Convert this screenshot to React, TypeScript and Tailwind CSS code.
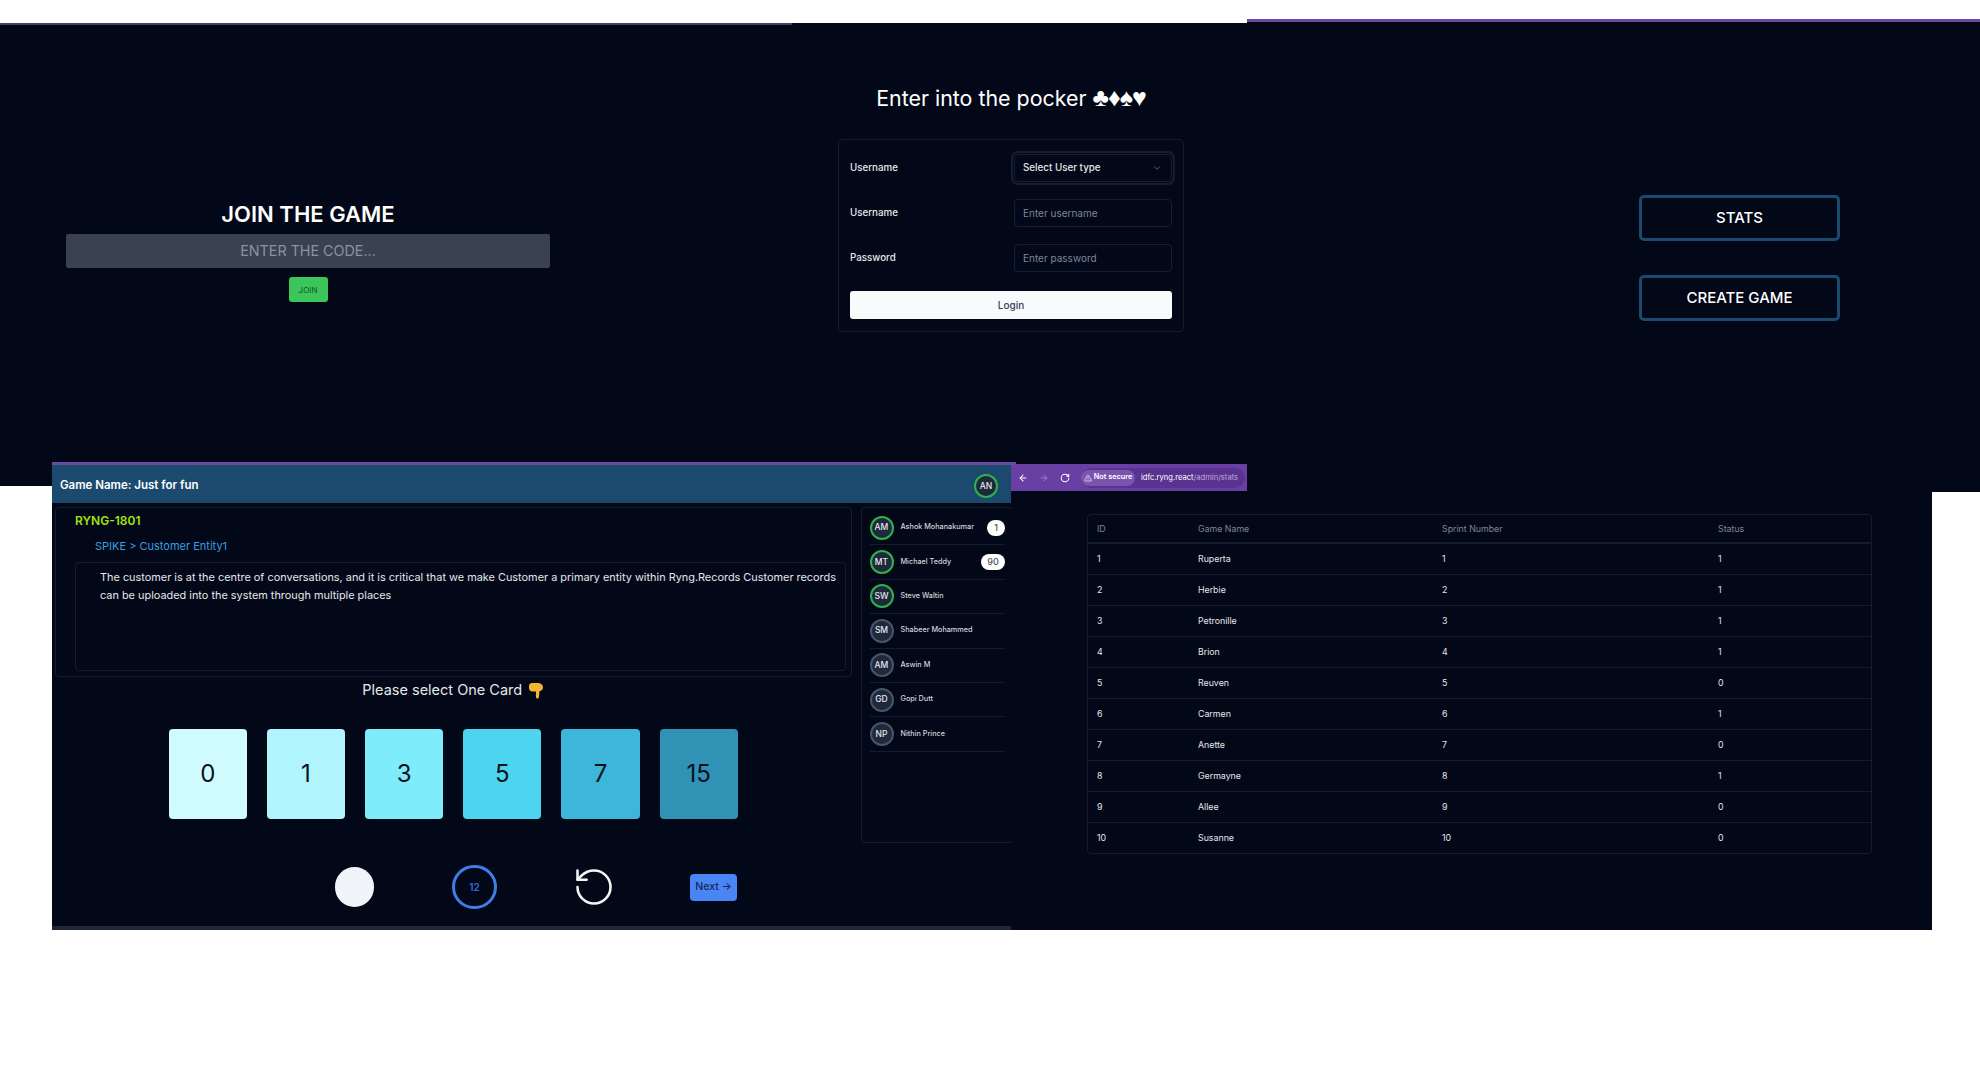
import { ArrowLeft, ArrowRight, ChevronDown, RotateCcw, RotateCw, TriangleAlert } from "lucide-react";

const players = [
  { i: "AM", n: "Ashok Mohanakumar", on: true, b: "1" },
  { i: "MT", n: "Michael Teddy", on: true, b: "90" },
  { i: "SW", n: "Steve Waltin", on: true },
  { i: "SM", n: "Shabeer Mohammed", on: false },
  { i: "AM", n: "Aswin M", on: false },
  { i: "GD", n: "Gopi Dutt", on: false },
  { i: "NP", n: "Nithin Prince", on: false },
];

const cards = [
  { v: "0", c: "bg-[#cffafe]" },
  { v: "1", c: "bg-[#b0f4fd]" },
  { v: "3", c: "bg-[#7eecfb]" },
  { v: "5", c: "bg-[#4dd5f0]" },
  { v: "7", c: "bg-[#3eb6d9]" },
  { v: "15", c: "bg-[#3092b5]" },
];

const rows: [string, string, string, string][] = [
  ["1", "Ruperta", "1", "1"],
  ["2", "Herbie", "2", "1"],
  ["3", "Petronille", "3", "1"],
  ["4", "Brion", "4", "1"],
  ["5", "Reuven", "5", "0"],
  ["6", "Carmen", "6", "1"],
  ["7", "Anette", "7", "0"],
  ["8", "Germayne", "8", "1"],
  ["9", "Allee", "9", "0"],
  ["10", "Susanne", "10", "0"],
];

function Hand() {
  return (
    <svg width="16" height="17" viewBox="0 0 16 17" className="ml-[6px] shrink-0">
      <path
        d="M1 4C1 2 2.4 1 4 1h5.5c2.6 0 5.5 1.400 5.500 4.200 0 2.300-1.500 3.600-3.500 4l-.6 5.800c-.1 1-.8 1.500-1.500 1.500s-1.400-.5-1.500-1.500L8 9.500H4.500C2.500 9.500 1 8 1 6z"
        fill="#f4b62f"
      />
    </svg>
  );
}

function JoinWindow() {
  return (
    <section className="absolute left-0 top-[23px] h-[463px] w-[792px] border-t-2 border-[#4a3a70] bg-[#020817]">
      <div className="flex w-[616px] flex-col items-center pt-[174px]">
        <h1 className="text-[22px] font-semibold leading-[30px] text-white">JOIN THE GAME</h1>
        <div className="mt-[5px] flex h-[34px] w-[484px] items-center justify-center rounded-[2px] bg-[#3a4252] text-[14.3px] text-[#8a93a3]">
          ENTER THE CODE...
        </div>
        <button className="mt-[9px] h-[25px] w-[39px] rounded-[3px] bg-[#3cc558] text-[8px] text-[#14532d]">JOIN</button>
      </div>
    </section>
  );
}

function Field({ label, placeholder }: { label: string; placeholder: string }) {
  return (
    <div className="mt-[17px] flex h-[28px] items-center justify-between">
      <span className="text-[9.75px] font-medium text-gray-200">{label}</span>
      <div className="flex h-[28.5px] w-[158px] items-center rounded-[4px] border border-[#161e30] pl-[8px] text-[10px] text-[#7d8798]">
        {placeholder}
      </div>
    </div>
  );
}

function LoginWindow() {
  return (
    <section className="absolute left-[448px] top-[23px] h-[463px] w-[799px] bg-[#020817] pl-[390px]">
      <h2 className="mt-[60px] h-[30px] w-[346px] whitespace-nowrap text-center text-[21.4px] leading-[30px] text-white">
        Enter into the pocker <span className="font-['Liberation_Sans',sans-serif] text-[25px] leading-[20px] tracking-[-1px]">♣♦♠♥</span>
      </h2>
      <div className="mt-[26px] h-[193px] w-[346px] rounded-[5px] border border-[#141c2e] px-[11px] pt-[14px]">
        <div className="flex h-[28px] items-center justify-between">
          <span className="text-[9.75px] font-medium text-gray-200">Username</span>
          <div className="flex h-[28px] w-[158px] items-center justify-between rounded-[4px] border border-[#161e30] pl-[8px] pr-[9px] text-[9.8px] font-medium text-gray-200 outline-2 outline-offset-1 outline-[#161e30]">
            Select User type
            <ChevronDown size={10} className="text-gray-500" />
          </div>
        </div>
        <Field label="Username" placeholder="Enter username" />
        <Field label="Password" placeholder="Enter password" />
        <button className="mt-[19px] h-[28px] w-full rounded-[3px] bg-[#f8fafc] text-[10px] font-medium text-[#374151]">Login</button>
      </div>
    </section>
  );
}

function MenuWindow() {
  return (
    <section className="absolute left-[1247px] top-[19px] h-[473px] w-[733px] border-t-[3px] border-[#6f4ba6] bg-[#020817] pl-[392px] pt-[173px]">
      <div className="flex w-[201px] flex-col gap-[34px]">
        <button className="h-[46px] rounded-[5px] border-[3px] border-[#1c4a6e] text-[15px] font-medium text-white">STATS</button>
        <button className="h-[46px] rounded-[5px] border-[3px] border-[#1c4a6e] text-[15px] font-medium text-white">CREATE GAME</button>
      </div>
    </section>
  );
}

function Avatar({ i, on }: { i: string; on: boolean }) {
  return (
    <div
      className={`flex h-[24px] w-[24px] shrink-0 items-center justify-center rounded-full border-2 bg-[#1e293b] text-[8.5px] font-medium text-gray-200 ${
        on ? "border-[#2fb24c]" : "border-[#475569]"
      }`}
    >
      {i}
    </div>
  );
}

function GameWindow() {
  return (
    <section className="absolute left-[52px] top-[462px] flex h-[468px] w-[959px] flex-col border-t-[3px] border-[#6b4a9e] bg-[#020817]">
      <div className="absolute -right-[5px] -top-[3px] h-[3px] w-[5px] bg-[#6b4a9e]" />
      <header className="flex h-[38px] shrink-0 items-center justify-between bg-[#1c4a6e] pl-[8px] pr-[13px] pt-[4px]">
        <span className="text-[11.5px] font-semibold text-white">Game Name: Just for fun</span>
        <Avatar i="AN" on />
      </header>
      <div className="flex flex-1 pl-[3px] pt-[4px]">
        <div className="w-[796.5px] shrink-0">
          <div className="h-[170px] rounded-[4px] border border-[#141c2e] pt-[5px]">
            <div className="ml-[19px] text-[12px] font-semibold leading-[16px] text-[#a2e30b]">RYNG-1801</div>
            <div className="ml-[39px] mt-[9px] text-[11px] leading-[16px] text-[#3a9ee4]">SPIKE &gt; Customer Entity1</div>
            <div className="ml-[19px] mr-[5px] mt-[8px] h-[109px] rounded-[4px] border border-[#141c2e] pl-[24px] pr-[4px] pt-[5px] text-[10.9px] leading-[18px] text-gray-200">
              The customer is at the centre of conversations, and it is critical that we make Customer a primary entity within Ryng.Records Customer records can be uploaded into the system through multiple places
            </div>
          </div>
          <div className="mt-[3px] flex h-[20px] items-center justify-center text-[14.5px] text-gray-200">
            Please select One Card
            <Hand />
          </div>
          <div className="mt-[29px] flex justify-center gap-[20px]">
            {cards.map((c) => (
              <div key={c.v} className={`flex h-[90px] w-[78.2px] items-center justify-center rounded-[4px] text-[24px] text-[#0b1220] ${c.c}`}>
                {c.v}
              </div>
            ))}
          </div>
          <div className="ml-[280px] mt-[46px] flex h-[44px] items-center">
            <div className="h-[40px] w-[39px] rounded-full bg-[#f1f5f9]" />
            <div className="ml-[78px] flex h-[44px] w-[45px] items-center justify-center rounded-full border-[3px] border-[#3f7ee8] text-[10px] font-semibold text-[#2f6de0]">12</div>
            <RotateCcw size={44} strokeWidth={1.4} className="ml-[75px] text-gray-100" />
            <button className="ml-[74px] h-[27px] w-[47px] rounded-[4px] bg-[#4a85f6] text-[10.5px] font-medium text-[#172554]">Next →</button>
          </div>
        </div>
        <aside className="ml-[9px] flex h-[336px] flex-1 flex-col rounded-l-[4px] border-y border-l border-[#141c2e] pl-[8px] pr-[6px] pt-[3px]">
          {players.map((p) => (
            <div key={p.n + p.i} className="flex h-[34.4px] shrink-0 items-center border-b border-[#141c2e]">
              <Avatar i={p.i} on={p.on} />
              <span className="ml-[7px] flex-1 text-[7.25px] font-medium text-gray-300">{p.n}</span>
              {p.b && (
                <span className={`flex h-[16px] items-center justify-center rounded-full bg-white text-[9px] font-medium text-gray-600 ${p.b.length > 1 ? "w-[24px]" : "w-[18px]"}`}>
                  {p.b}
                </span>
              )}
            </div>
          ))}
        </aside>
      </div>
      <div className="h-[4px] shrink-0 bg-[#1e2735]" />
    </section>
  );
}

function StatsWindow() {
  return (
    <section className="absolute left-[1011px] top-[464px] h-[466px] w-[921px] bg-[#020817]">
      <div className="flex h-[27px] w-[236px] items-center bg-[#6a3fa3] pl-[7px] text-white">
        <ArrowLeft size={10} strokeWidth={2.5} />
        <ArrowRight size={10} strokeWidth={2} className="ml-[11px] text-[#a98fd0]" />
        <RotateCw size={10} strokeWidth={2.5} className="ml-[11px]" />
        <div className="ml-[11px] flex h-[20px] w-[164px] items-center rounded-full bg-[#5a3290]">
          <span className="flex h-[16px] w-[54px] items-center justify-center gap-[2px] rounded-full bg-[#7a55b0] text-[7.300px] font-semibold">
            <TriangleAlert size={8} />
            Not secure
          </span>
          <span className="ml-[6px] text-[7.6px]">
            idfc.ryng.react<span className="text-[#bda8dc]">/admin/stats</span>
          </span>
        </div>
      </div>
      <div className="ml-[76px] mt-[23px] w-[785px] rounded-[4px] border border-[#141c2e]">
        <table className="w-full table-fixed text-left text-[8.8px]">
          <thead>
            <tr className="h-[28px] border-b-2 border-[#141c2e] text-[#7d8798]">
              <th className="w-[101px] pl-[9px] font-normal">ID</th>
              <th className="w-[244px] pl-[9px] font-normal">Game Name</th>
              <th className="w-[276px] pl-[9px] font-normal">Sprint Number</th>
              <th className="pl-[9px] font-normal">Status</th>
            </tr>
          </thead>
          <tbody className="text-gray-200">
            {rows.map((r, idx) => (
              <tr key={r[0]} className={`h-[31px] ${idx < 9 ? "border-b border-[#141c2e]" : ""}`}>
                {r.map((c, j) => (
                  <td key={j} className="pl-[9px]">{c}</td>
                ))}
              </tr>
            ))}
          </tbody>
        </table>
      </div>
    </section>
  );
}

export default function App() {
  return (
    <div className="relative h-[1080px] w-[1980px] overflow-hidden bg-white font-[Inter,sans-serif]">
      <LoginWindow />
      <JoinWindow />
      <MenuWindow />
      <StatsWindow />
      <GameWindow />
    </div>
  );
}
